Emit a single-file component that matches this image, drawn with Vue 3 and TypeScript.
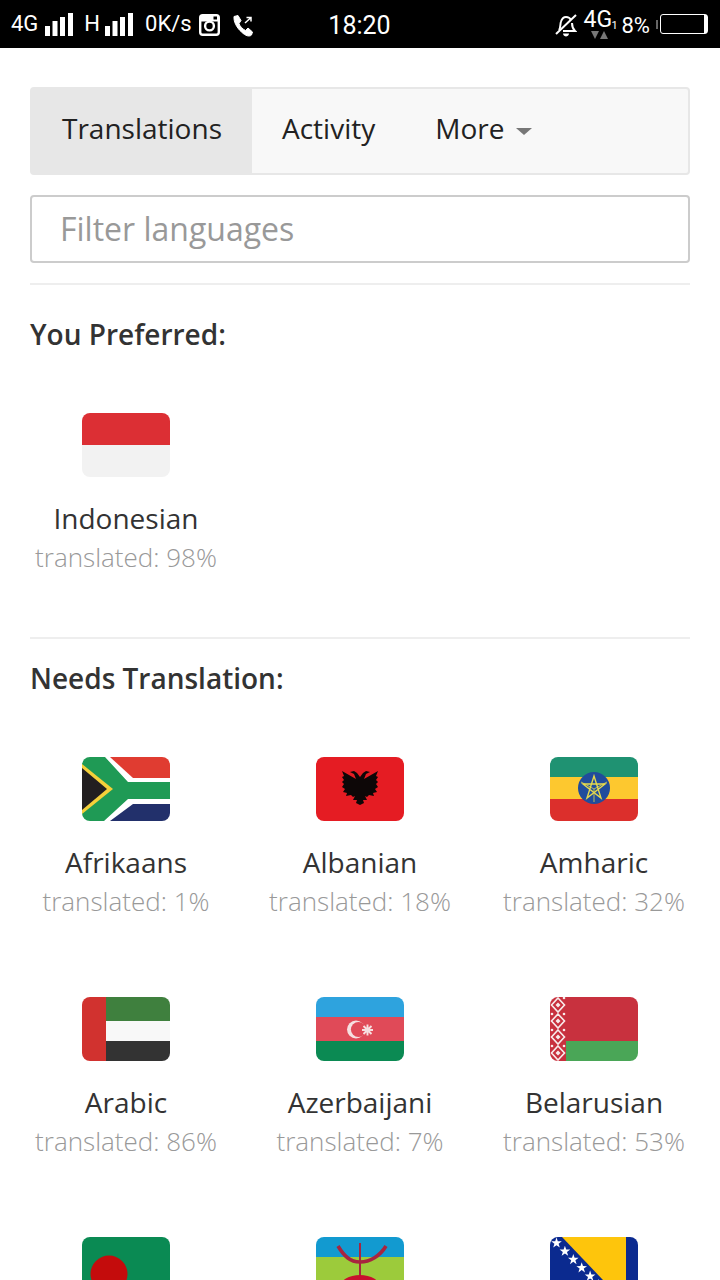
<script setup lang="ts">
interface Lang {
  code: string
  name?: string
  pct?: number
}

const preferred: Lang[] = [{ code: 'id', name: 'Indonesian', pct: 98 }]

// last row is cut off by the screen, only the flags show
const needs: Lang[] = [
  { code: 'za', name: 'Afrikaans', pct: 1 },
  { code: 'al', name: 'Albanian', pct: 18 },
  { code: 'et', name: 'Amharic', pct: 32 },
  { code: 'ae', name: 'Arabic', pct: 86 },
  { code: 'az', name: 'Azerbaijani', pct: 7 },
  { code: 'by', name: 'Belarusian', pct: 53 },
  { code: 'bd' },
  { code: 'ber' },
  { code: 'ba' }
]

const sections = [
  { title: 'You Preferred:', items: preferred },
  { title: 'Needs Translation:', items: needs }
]

const signalBars = [
  { x: 0, h: 10 },
  { x: 7.5, h: 15 },
  { x: 15, h: 19 },
  { x: 23, h: 23 }
]

const hoist = [0, 16, 32, 48]

const eagleHalf =
  'M44 20 L47 16 L50 14 L54 15 L50 17 L48 22 L55 18 L62 14 L60 19 L62 20 L60 23 L62 25 L60 27 L62 30 L59 32 L61 35 L57 36 L58 39 L53 38 L51 40 L49 39 L51 43 L47 43 L48 46 L44 48 Z'

// five point star for the diagonal on the Bosnian flag
function star(i: number): string {
  const cx = 6.5 + (i - 1) * 8.4
  const cy = 6 + (i - 1) * 8.3
  const pts: string[] = []
  for (let k = 0; k < 10; k++) {
    const r = k % 2 === 0 ? 5.6 : 2.2
    const a = -Math.PI / 2 + (k * Math.PI) / 5
    pts.push(`${(cx + r * Math.cos(a)).toFixed(2)} ${(cy + r * Math.sin(a)).toFixed(2)}`)
  }
  return 'M' + pts.join(' L') + ' Z'
}
</script>

<template>
  <div class="page">
    <header class="status">
      <div class="status-left">
        <span class="st-text">4G</span>
        <svg class="bars first" width="28" height="23" viewBox="0 0 28 23">
          <rect v-for="b in signalBars" :key="b.x" :x="b.x" :y="23 - b.h" width="5" :height="b.h" fill="#fff" />
        </svg>
        <span class="st-text net-h">H</span>
        <svg class="bars second" width="28" height="23" viewBox="0 0 28 23">
          <rect v-for="b in signalBars" :key="b.x" :x="b.x" :y="23 - b.h" width="5" :height="b.h" fill="#fff" />
        </svg>
        <span class="st-text speed">0K/s</span>
        <svg class="insta" width="21" height="22" viewBox="0 0 21 22">
          <rect x="1.2" y="1.2" width="18.6" height="19.6" rx="2.5" fill="none" stroke="#fff" stroke-width="2.4" />
          <rect x="1" y="1" width="19" height="6.5" fill="#fff" />
          <circle cx="10.5" cy="12" r="4.4" fill="#000" stroke="#fff" stroke-width="2.4" />
          <rect x="14.5" y="2.5" width="3.5" height="3" fill="#000" />
        </svg>
        <svg class="call" width="20" height="22" viewBox="0 0 20 22">
          <path d="M1 1.5 L5 0.5 L8 5.5 L6 8.5 C7 11.5 9.5 14 12.5 15.5 L15 13 L19.5 17 L18.5 20 C16.5 22 12.5 21 8.5 17 C4 13 0.5 7 1 1.5 Z" fill="#fff" stroke="#fff" stroke-width="1" stroke-linejoin="round" />
          <path d="M12 8 L17.5 3 M13.5 2.5 H18 V6.5" fill="none" stroke="#fff" stroke-width="1.5" />
        </svg>
      </div>
      <span class="clock">18:20</span>
      <div class="status-right">
        <svg class="bell" width="22" height="23" viewBox="0 0 22 23">
          <path d="M4 16 C6 13 5 10 6 7.5 C7 4.5 9 3 11 3 C13 3 15 4 16 6 M17 9 C17 12 17 14 20 17 H8" fill="none" stroke="#fff" stroke-width="2" />
          <path d="M1 20 L21 1" stroke="#fff" stroke-width="2" />
          <path d="M8 19.5 H14 C14 21.5 12 22.5 11 22.5 C10 22.5 8 21.5 8 19.5 Z" fill="#fff" />
        </svg>
        <div class="net">
          <span class="net-4g">4G</span><span class="net-sim">1</span>
          <svg class="net-arrows" width="17" height="8" viewBox="0 0 17 8">
            <path d="M0 0 H8 L4 8 Z" fill="#777" />
            <path d="M9 8 H17 L13 0 Z" fill="#777" />
          </svg>
        </div>
        <span class="st-text pct">8%</span>
        <div class="battery">
          <span class="battery-fill"></span>
        </div>
      </div>
    </header>

    <main class="content">
      <nav class="tabs">
        <a class="tab active">Translations</a>
        <a class="tab">Activity</a>
        <a class="tab">More <span class="caret"></span></a>
      </nav>

      <input class="filter" type="text" placeholder="Filter languages" />

      <section v-for="s in sections" :key="s.title" class="section">
        <h3>{{ s.title }}</h3>
        <div class="grid">
          <div v-for="l in s.items" :key="l.code" class="lang">
            <svg class="flag" width="88" height="64" viewBox="0 0 88 64">
              <g v-if="l.code === 'id'">
                <rect width="88" height="32" fill="#dc2f34" />
                <rect y="32" width="88" height="32" fill="#f2f2f2" />
              </g>
              <g v-else-if="l.code === 'za'">
                <rect width="88" height="64" fill="#fff" />
                <path d="M28 0 H88 V21 H51 Z" fill="#e03c31" />
                <path d="M51 47 H88 V64 H28 Z" fill="#22306b" />
                <path d="M0 0 H23 L46 25 H88 V42 H46 L22 64 H0 Z" fill="#1f9a55" />
                <path d="M0 7 L31 32 L0 57 Z" fill="#f5d03a" />
                <path d="M0 11 L25 32 L0 53 Z" fill="#231f20" />
              </g>
              <g v-else-if="l.code === 'al'">
                <rect width="88" height="64" fill="#e51c23" />
                <path :d="eagleHalf" fill="#0d0707" />
                <path :d="eagleHalf" fill="#0d0707" transform="matrix(-1 0 0 1 88 0)" />
              </g>
              <g v-else-if="l.code === 'et'">
                <rect width="88" height="20" fill="#1f9272" />
                <rect y="20" width="88" height="22" fill="#fdc82f" />
                <rect y="42" width="88" height="22" fill="#dc2f2c" />
                <ellipse cx="44" cy="31" rx="16" ry="16" fill="#204c9c" />
                <path d="M44 19 L51 41 L33 27 H55 L37 41 Z" fill="none" stroke="#e5d84d" stroke-width="1.4" />
                <path d="M44 32 V45 M44 32 L31 25 M44 32 L57 25" stroke="#e5d84d" stroke-width="0.8" />
              </g>
              <g v-else-if="l.code === 'ae'">
                <rect x="24" width="64" height="24" fill="#3f803e" />
                <rect x="24" y="24" width="64" height="20" fill="#f8f8f8" />
                <rect x="24" y="44" width="64" height="20" fill="#333" />
                <rect width="24" height="64" fill="#d1322f" />
              </g>
              <g v-else-if="l.code === 'az'">
                <rect width="88" height="20" fill="#2ea3de" />
                <rect y="20" width="88" height="24" fill="#e04a58" />
                <rect y="44" width="88" height="20" fill="#0b8a53" />
                <circle cx="40" cy="32.5" r="9" fill="#f6dfe0" />
                <circle cx="42.5" cy="32.5" r="7.6" fill="#e04a58" />
                <path d="M46 33 H57 M51.5 27.5 V38.5 M47.5 29 L55.5 37 M55.5 29 L47.5 37" stroke="#f6dfe0" stroke-width="1.9" />
              </g>
              <g v-else-if="l.code === 'by'">
                <rect x="16" width="72" height="44" fill="#c8313e" />
                <rect x="16" y="44" width="72" height="20" fill="#4aa657" />
                <rect width="16" height="64" fill="#c8313e" />
                <g v-for="y in hoist" :key="y">
                  <path :d="`M8 ${y + 1} L14.5 ${y + 8} L8 ${y + 15} L1.5 ${y + 8} Z`" fill="none" stroke="#f8ecec" stroke-width="1.6" />
                  <path :d="`M8 ${y + 5.5} L10.5 ${y + 8} L8 ${y + 10.5} L5.5 ${y + 8} Z`" fill="#f8ecec" />
                  <circle cx="2" :cy="y + 1" r="1.3" fill="#f8ecec" />
                  <circle cx="14" :cy="y + 1" r="1.3" fill="#f8ecec" />
                </g>
              </g>
              <g v-else-if="l.code === 'bd'">
                <rect width="88" height="64" fill="#0a8a53" />
                <circle cx="27" cy="37" r="18.5" fill="#c40c0c" />
              </g>
              <g v-else-if="l.code === 'ber'">
                <rect width="88" height="20" fill="#129ad0" />
                <rect y="20" width="88" height="24" fill="#9ccb3b" />
                <rect y="44" width="88" height="20" fill="#f6d90f" />
                <path d="M22 9 C28 19 34 25 44 25 C54 25 64 19 70 9" fill="none" stroke="#a8243f" stroke-width="3.6" />
                <path d="M44 6 V40" stroke="#a8243f" stroke-width="2" />
                <ellipse cx="44" cy="50" rx="20" ry="12" fill="#c8102e" />
              </g>
              <g v-else-if="l.code === 'ba'">
                <rect width="88" height="64" fill="#0b2a8f" />
                <path d="M12 0 H76 V64 H73 Z" fill="#fec50c" />
                <path v-for="i in 7" :key="i" :d="star(i)" fill="#fff" />
              </g>
            </svg>
            <div v-if="l.name" class="lang-name">{{ l.name }}</div>
            <div v-if="l.name" class="lang-pct">translated: {{ l.pct }}%</div>
          </div>
        </div>
      </section>
    </main>
  </div>
</template>

<style>
html,
body {
  margin: 0;
  background: #fff;
}
</style>

<style scoped>
.page {
  width: 720px;
  height: 1280px;
  overflow: hidden;
  background: #fff;
  font-family: "Open Sans", "Liberation Sans", sans-serif;
  color: #333;
}

.status {
  height: 48px;
  background: #000;
  color: #fff;
  display: flex;
  align-items: center;
  justify-content: space-between;
  font-family: Roboto, "Liberation Sans", sans-serif;
  padding: 0 12px 0 11px;
  box-sizing: border-box;
}

.status-left,
.status-right {
  display: flex;
  align-items: center;
  width: 270px;
}

.status-right {
  justify-content: flex-end;
}

.st-text {
  font-size: 22px;
  line-height: 1;
}

.bars.first {
  margin-left: 7px;
}

.net-h {
  margin-left: 11px;
}

.bars.second {
  margin-left: 5px;
}

.speed {
  margin-left: 12px;
}

.insta {
  margin-left: 7px;
  margin-top: 2px;
}

.call {
  margin-left: 13px;
  margin-top: 3px;
}

.clock {
  font-size: 25px;
  padding-top: 3px;
}

.bell {
  margin-right: 7px;
  margin-top: 2px;
}

.net {
  position: relative;
  width: 34px;
  height: 34px;
  margin-right: 4px;
}

.net-4g {
  font-size: 23px;
  position: absolute;
  left: 0;
  top: -1px;
}

.net-sim {
  font-size: 11px;
  position: absolute;
  left: 28px;
  top: 12px;
}

.net-arrows {
  position: absolute;
  left: 7px;
  top: 24px;
}

.pct {
  margin-right: 10px;
  padding-top: 3px;
}

.battery {
  width: 48px;
  height: 20px;
  box-sizing: border-box;
  border: 1.5px solid #fff;
  border-radius: 3px;
  display: flex;
  justify-content: flex-end;
  position: relative;
}

.battery::before {
  content: "";
  position: absolute;
  left: -5px;
  top: 5px;
  width: 2px;
  height: 9px;
  background: #666;
}

.battery-fill {
  width: 3px;
  background: #fff;
}

.content {
  padding: 39px 30px 0;
}

.tabs {
  height: 88px;
  box-sizing: border-box;
  display: flex;
  background: #f8f8f8;
  border: 2px solid #e7e7e7;
  border-radius: 4px;
  font-size: 28px;
  color: #222;
}

.tab {
  padding: 0 30px;
  line-height: 78px;
  height: 84px;
}

.tab.active {
  background: #e7e7e7;
}

.caret {
  display: inline-block;
  width: 0;
  height: 0;
  margin-left: 4px;
  vertical-align: middle;
  border-top: 7px solid #777;
  border-left: 8px solid transparent;
  border-right: 8px solid transparent;
}

.filter {
  display: block;
  width: 100%;
  height: 68px;
  margin-top: 20px;
  box-sizing: border-box;
  border: 2px solid #ccc;
  border-radius: 4px;
  padding: 0 28px 2px;
  font-family: inherit;
  font-size: 32px;
  outline: none;
}

.filter::placeholder {
  color: #999;
  opacity: 1;
}

.section {
  border-top: 2px solid #eee;
  margin-top: 20px;
}

.section + .section {
  margin-top: 0;
}

h3 {
  margin: 0;
  font-size: 28px;
  font-weight: 600;
  line-height: 40px;
  padding-top: 29px;
}

.section + .section h3 {
  padding-top: 19px;
}

.grid {
  display: grid;
  grid-template-columns: repeat(3, 1fr);
  margin: 0 -21px;
  padding-top: 59px;
}

.lang {
  height: 240px;
  display: flex;
  flex-direction: column;
  align-items: center;
}

.section:first-of-type .lang {
  height: 224px;
}

.flag {
  border-radius: 8px;
  flex: none;
}

.lang-name {
  font-size: 28px;
  line-height: 40px;
  margin-top: 21px;
}

.lang-pct {
  font-size: 26px;
  font-weight: 300;
  line-height: 38px;
  color: #999;
}
</style>
